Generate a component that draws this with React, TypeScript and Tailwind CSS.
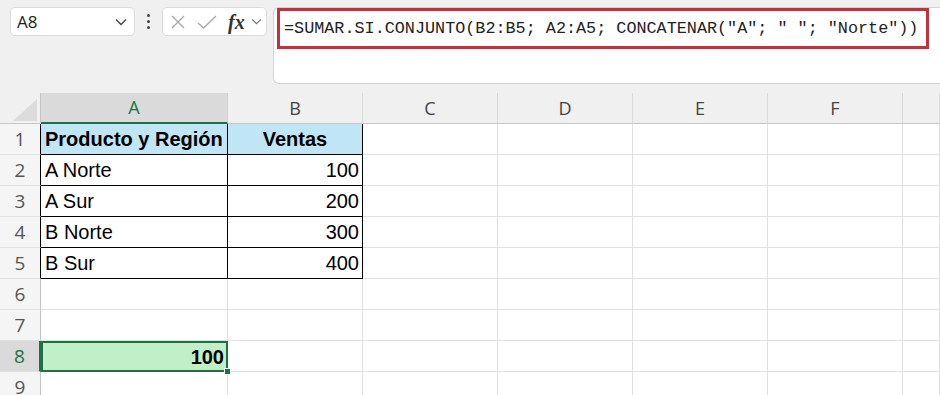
import React from "react";

const COLS = ["A", "B", "C", "D", "E", "F", ""];
const WIDTHS = ["w-[187px]", "w-[135px]", "w-[135px]", "w-[135px]", "w-[135px]", "w-[135px]", "flex-1"];

type Cell = { text?: string; kind?: "head" | "text" | "num" | "result" };

const rows: Cell[][] = [
  [{ text: "Producto y Región", kind: "head" }, { text: "Ventas", kind: "head" }],
  [{ text: "A Norte", kind: "text" }, { text: "100", kind: "num" }],
  [{ text: "A Sur", kind: "text" }, { text: "200", kind: "num" }],
  [{ text: "B Norte", kind: "text" }, { text: "300", kind: "num" }],
  [{ text: "B Sur", kind: "text" }, { text: "400", kind: "num" }],
  [],
  [],
  [{ text: "100", kind: "result" }],
  [],
];

function Chevron({ className }: { className?: string }) {
  return (
    <svg viewBox="0 0 12 8" className={className} fill="none" stroke="currentColor" strokeWidth="1.4">
      <path d="M1 1.5 L6 6.5 L11 1.5" />
    </svg>
  );
}

export default function App() {
  return (
    <div className="w-[940px] h-[395px] overflow-hidden bg-[#f0f0f0] font-['Liberation_Sans',sans-serif]">
      {/* Formula bar */}
      <div className="flex items-start h-[93px] pl-[10px] pt-[7px]">
        <div className="w-[125px] h-[29px] bg-white rounded-[5px] border border-[#dcdcdc] flex items-center pl-[6px] pr-[7px]">
          <span className="flex-1 text-[17px] text-[#222] font-['Open_Sans',sans-serif]">A8</span>
          <Chevron className="w-[12px] h-[8px] text-[#444]" />
        </div>
        <div className="w-[27px] h-[29px] flex flex-col items-center justify-center gap-[3px]">
          <span className="w-[3px] h-[3px] rounded-full bg-[#444]" />
          <span className="w-[3px] h-[3px] rounded-full bg-[#444]" />
          <span className="w-[3px] h-[3px] rounded-full bg-[#444]" />
        </div>
        <div className="w-[105px] h-[29px] bg-white rounded-[5px] border border-[#dcdcdc] flex items-center pl-[7px]">
          <svg viewBox="0 0 16 16" className="w-[16px] h-[16px] text-[#a8a8a8]" fill="none" stroke="currentColor" strokeWidth="1.3">
            <path d="M2 2 L14 14 M14 2 L2 14" />
          </svg>
          <svg viewBox="0 0 20 16" className="w-[20px] h-[16px] ml-[11px] text-[#a8a8a8]" fill="none" stroke="currentColor" strokeWidth="1.3">
            <path d="M1 9 L6.5 14 L19 2" />
          </svg>
          <span className="ml-[11px] text-[20px] leading-none italic font-bold text-[#333] font-['Liberation_Serif',serif]">fx</span>
          <Chevron className="w-[11px] h-[7px] ml-[6px] text-[#777]" />
        </div>
        <div className="flex-1 ml-[6px] mr-[-10px] h-[77px] bg-white rounded-l-[6px] border border-r-0 border-[#d4d4d4]">
          <div className="ml-[3px] w-[652px] h-[41px] border-[3px] border-[#c3313c] flex items-center pl-[4px]">
            <span className="text-[16.8px] text-[#222] whitespace-pre font-['Liberation_Mono',monospace]">
              =SUMAR.SI.CONJUNTO(B2:B5; A2:A5; CONCATENAR("A"; " "; "Norte"))
            </span>
          </div>
        </div>
      </div>

      {/* Column headers */}
      <div className="flex h-[31px] font-['Open_Sans',sans-serif] text-[18px]">
        <div className="w-[41px] border-r border-b border-[#c6c6c6] flex items-end justify-end pr-[3px] pb-[2px]">
          <svg viewBox="0 0 24 22" className="w-[24px] h-[22px]">
            <polygon points="24,0 24,22 0,22" fill="#dcdcdc" />
          </svg>
        </div>
        {COLS.map((c, i) => (
          <div
            key={i}
            className={`${WIDTHS[i]} flex items-center justify-center ${
              c === "A"
                ? "bg-[#dadada] text-[#107c41] border-b-2 border-b-[#1e7145] border-r border-r-[#d0d0d0]"
                : "text-[#444] border-b border-b-[#c6c6c6] border-r border-r-[#dadada]"
            }`}
          >
            {c}
          </div>
        ))}
      </div>

      {/* Rows */}
      {rows.map((row, r) => {
        const n = r + 1;
        const inTable = n <= 5;
        const selected = n === 8;
        return (
          <div key={r} className="flex h-[31px]">
            <div
              className={`w-[41px] flex items-center justify-center text-[19px] font-['Open_Sans',sans-serif] border-b border-[#e1e1e1] ${
                selected
                  ? "bg-[#dadada] text-[#1e7145] border-r-2 border-r-[#1e7145]"
                  : inTable
                  ? "bg-[#f5f5f5] text-[#555] border-r border-r-black"
                  : "bg-[#f5f5f5] text-[#555] border-r border-r-[#c6c6c6]"
              }`}
            >
              {n}
            </div>
            {COLS.map((_, c) => {
              const cell = row[c];
              const boxed = inTable && c <= 1;
              let cls = `${WIDTHS[c]} flex items-center text-[20px] text-black bg-white border-r border-b `;
              cls += boxed ? "border-black " : "border-[#e1e1e1] ";
              if (cell?.kind === "head") cls += "!bg-[#c0e6f5] font-bold justify-center ";
              if (cell?.kind === "head" && c === 0) cls += "!justify-start pl-[4px] ";
              if (cell?.kind === "text") cls += "pl-[4px] ";
              if (cell?.kind === "num") cls += "justify-end pr-[3px] ";
              if (cell?.kind === "result")
                cls = `${WIDTHS[c]} relative flex items-center justify-end pr-[2px] text-[20px] font-bold text-black bg-[#c1f0c8] border-2 border-[#1e7145] `;
              return (
                <div key={c} className={cls}>
                  {cell?.text}
                  {cell?.kind === "result" && (
                    <span className="absolute right-[-5px] bottom-[-5px] w-[7px] h-[7px] bg-[#1e7145] border border-white" />
                  )}
                </div>
              );
            })}
          </div>
        );
      })}
    </div>
  );
}
